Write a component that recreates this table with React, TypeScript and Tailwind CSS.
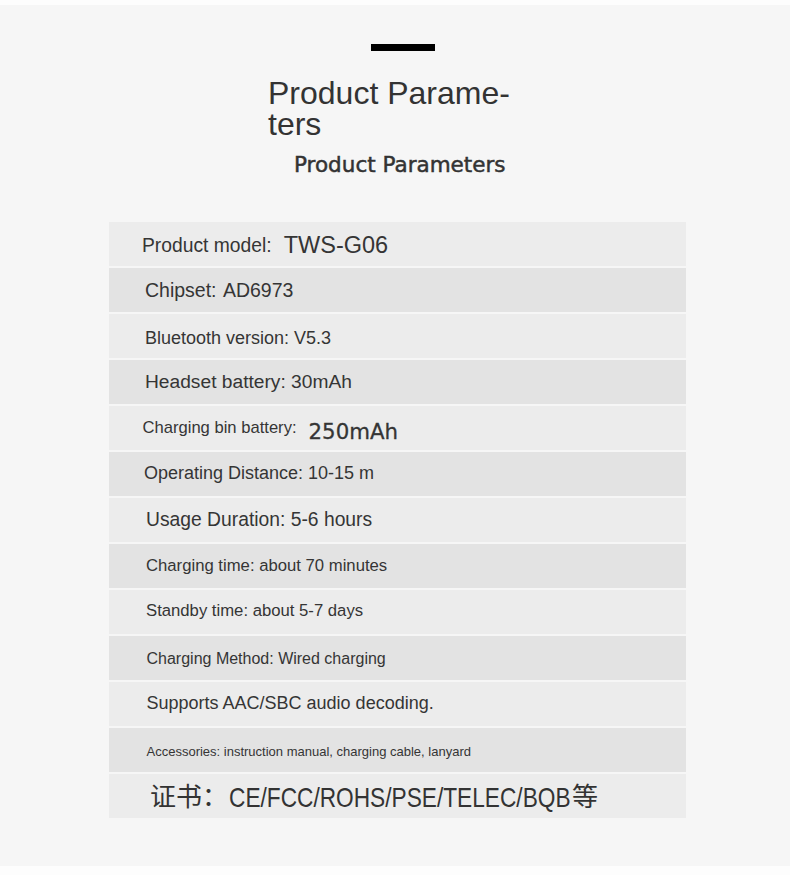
type Segment = {
  text: string;
  className: string;
};

interface Row {
  segments: Segment[];
}

const arial = "font-['Liberation_Sans',Arial,sans-serif]";
const dejavu = "font-['DejaVu_Sans',sans-serif]";
const cjk = "font-['Noto_Sans_CJK_SC',sans-serif]";

// each segment carries its own offset + size, the source image mixes sizes row by row
const ROWS: Row[] = [
  {
    segments: [
      { text: 'Product model:', className: `${arial} ml-[33px] mt-[14px] text-[19.3px]` },
      { text: 'TWS-G06', className: `${arial} ml-[12px] mt-[12px] text-[23.5px]` },
    ],
  },
  { segments: [{ text: 'Chipset: AD6973', className: `${arial} ml-[36px] mt-[12.5px] text-[19.5px] [word-spacing:2px]` }] },
  { segments: [{ text: 'Bluetooth version: V5.3', className: `${arial} ml-[36px] mt-[15px] text-[18px]` }] },
  { segments: [{ text: 'Headset battery: 30mAh', className: `${arial} ml-[36px] mt-[12px] text-[19.2px]` }] },
  {
    segments: [
      { text: 'Charging bin battery:', className: `${arial} ml-[33.5px] mt-[14.3px] text-[16.6px]` },
      { text: '250mAh', className: `${dejavu} ml-[12px] mt-[14.5px] text-[21.3px] [-webkit-text-stroke:0.3px_#363636]` },
    ],
  },
  { segments: [{ text: 'Operating Distance: 10-15 m', className: `${arial} ml-[35px] mt-[12px] text-[18px]` }] },
  { segments: [{ text: 'Usage Duration: 5-6 hours', className: `${arial} ml-[37px] mt-[11.6px] text-[19.3px]` }] },
  { segments: [{ text: 'Charging time: about 70 minutes', className: `${arial} ml-[37px] mt-[13.6px] text-[16.7px]` }] },
  { segments: [{ text: 'Standby time: about 5-7 days', className: `${arial} ml-[37px] mt-[13.2px] text-[16.7px]` }] },
  { segments: [{ text: 'Charging Method: Wired charging', className: `${arial} ml-[37.5px] mt-[14.5px] text-[16px]` }] },
  { segments: [{ text: 'Supports AAC/SBC audio decoding.', className: `${arial} ml-[37.5px] mt-[12px] text-[18px]` }] },
  {
    segments: [
      {
        text: 'Accessories: instruction manual, charging cable, lanyard',
        className: `${arial} ml-[37.5px] mt-[16.7px] text-[13px]`,
      },
    ],
  },
];

export default function App() {
  return (
    <div className="min-h-[875px] w-[790px] bg-[#fdfdfd] pt-[5px]">
      <div className="flex h-[861px] flex-col bg-[#f6f6f6]">
        {/* Heading */}
        <div className="ml-[371px] mt-[39px] h-[7px] w-[64px] bg-black" />
        <h1 className={`${arial} ml-[268px] mt-[27px] text-[32px] leading-[31px] text-[#333]`}>
          Product Parame-
          <br />
          ters
        </h1>
        <p
          className={`${dejavu} ml-[294px] mt-[12px] h-[25px] text-[21.5px] leading-[25px] text-[#333] [-webkit-text-stroke:0.5px_#333]`}
        >
          Product Parameters
        </p>

        {/* Parameter table */}
        <div className="ml-[109px] mt-[45px] flex w-[577px] flex-col gap-[2px]">
          {ROWS.map((row, i) => (
            <div
              key={i}
              className={`flex h-[44px] items-start whitespace-nowrap text-[#353535] ${
                i % 2 === 0 ? 'bg-[#ececec]' : 'bg-[#e3e3e3]'
              }`}
            >
              {row.segments.map((s, j) => (
                <span key={j} className={`${s.className} leading-none`}>
                  {s.text}
                </span>
              ))}
            </div>
          ))}

          {/* Certificates: latin part is a condensed face in the source */}
          <div className="flex h-[44px] items-start whitespace-nowrap bg-[#ececec] text-[#333]">
            <span className={`${cjk} ml-[41px] mt-[8.4px] text-[26px] leading-none`}>证书：</span>
            <span className="ml-[1px] mt-[9.5px] inline-block w-[343px] overflow-visible">
              <span
                className={`${arial} inline-block origin-left scale-x-[0.81] text-[28px] leading-none`}
              >
                CE/FCC/ROHS/PSE/TELEC/BQB
              </span>
            </span>
            <span className={`${cjk} mt-[8.4px] text-[26px] leading-none`}>等</span>
          </div>
        </div>
      </div>
    </div>
  );
}
